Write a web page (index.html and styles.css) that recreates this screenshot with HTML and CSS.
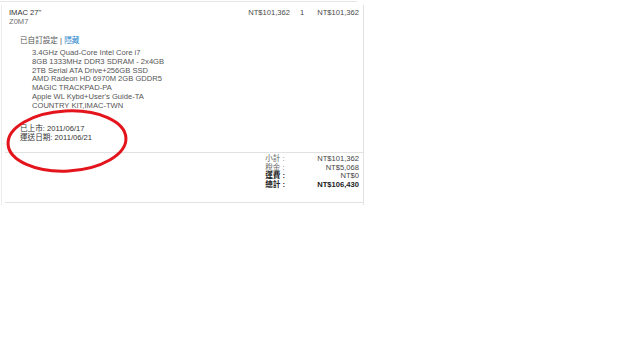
FILE: index.html
```html
<!DOCTYPE html>
<html lang="zh-Hant">
<head>
    <meta charset="UTF-8">
    <meta name="viewport" content="width=device-width, initial-scale=1.0">
    <title>購物車</title>
    <link rel="stylesheet" href="styles.css">
</head>
<body>
    <div class="top-rule"></div>

    <div class="cart">
        <div class="item">
            <div class="item-head">
                <div class="product">
                    <div class="product-name">IMAC 27"</div>
                    <div class="part-no">Z0M7</div>
                </div>
                <div class="cell price">NT$101,362</div>
                <div class="cell qty">1</div>
                <div class="cell subtotal">NT$101,362</div>
            </div>

            <div class="config">
                <div class="config-title">已自訂設定 | <a href="#">隱藏</a></div>
                <ul class="config-list">
                    <li>3.4GHz Quad-Core Intel Core i7</li>
                    <li>8GB 1333MHz DDR3 SDRAM - 2x4GB</li>
                    <li>2TB Serial ATA Drive+256GB SSD</li>
                    <li>AMD Radeon HD 6970M 2GB GDDR5</li>
                    <li>MAGIC TRACKPAD-PA</li>
                    <li>Apple WL Kybd+User's Guide-TA</li>
                    <li>COUNTRY KIT,IMAC-TWN</li>
                </ul>
            </div>

            <div class="dates">
                <div>已上市: 2011/06/17</div>
                <div>運送日期: 2011/06/21</div>
            </div>
        </div>

        <div class="summary">
            <span class="label">小計 :</span><span class="value">NT$101,362</span>
            <span class="label">稅金 :</span><span class="value">NT$5,068</span>
            <span class="label strong">運費 :</span><span class="value">NT$0</span>
            <span class="label strong">總計 :</span><span class="value strong">NT$106,430</span>
        </div>
    </div>

    <svg class="annotation" width="150" height="185" viewBox="0 0 150 185">
        <ellipse cx="67" cy="141" rx="59" ry="30" transform="rotate(-3 67 141)"></ellipse>
    </svg>
</body>
</html>
```

FILE: styles.css
```css
body {
    font-family: 'Liberation Sans', Arial, 'Noto Sans CJK TC', sans-serif;
    font-size: 7.6px;
    line-height: 8.9px;
    margin: 0;
    background-color: #fff;
    color: #4a4a4a;
}

.top-rule {
    width: 357px;
    height: 1px;
    margin-top: 1px;
    background-color: #e6e6e6;
}

.cart {
    width: 361px;
    margin: 3px 0 0 1px;
    padding-bottom: 2px;
    border-left: 1px solid #ececec;
    border-right: 1px solid #e2e2e2;
}

.item {
    padding: 4px 4px 9px 7px;
}

.item-head {
    display: flex;
    align-items: flex-start;
}

.product {
    flex: 1;
}

.product-name {
    color: #333;
}

.part-no {
    color: #707070;
}

.price {
    text-align: right;
}

.qty {
    width: 20px;
    margin-left: 2px;
    text-align: center;
}

.subtotal {
    width: 47px;
    text-align: right;
}

.config {
    margin-top: 10px;
    padding-left: 11px;
}

.config-title {
    color: #555;
}

.config-title a {
    color: #1a82c8;
    text-decoration: none;
}

.config-list {
    list-style: none;
    margin: 3px 0 0;
    padding-left: 12px;
    color: #555;
}

.dates {
    margin-top: 14px;
    padding-left: 11px;
    color: #333;
}

.summary {
    display: grid;
    grid-template-columns: auto 74px;
    justify-content: end;
    margin-left: 3px;
    padding: 2px 4px 12px 0;
    line-height: 8.7px;
    border-top: 1px solid #e2e2e2;
    border-bottom: 1px solid #e2e2e2;
}

.summary .label {
    color: #666;
}

.summary .value {
    text-align: right;
    color: #444;
}

.summary .strong {
    font-weight: bold;
    color: #222;
}

.annotation {
    position: absolute;
    top: 0;
    left: 0;
    pointer-events: none;
}

.annotation ellipse {
    fill: none;
    stroke: #e3141c;
    stroke-width: 3;
}
```
